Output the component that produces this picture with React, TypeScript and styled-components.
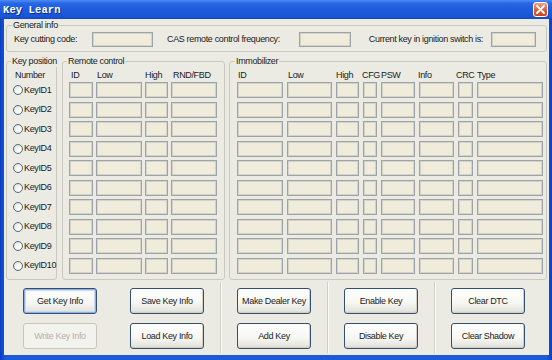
import React from 'react';
import styled, { createGlobalStyle } from 'styled-components';

type Col = { title: string; w: number; indent: number };

const remoteCols: Col[] = [
  { title: 'ID', w: 24, indent: 2 },
  { title: 'Low', w: 46, indent: 1 },
  { title: 'High', w: 23, indent: 0 },
  { title: 'RND/FBD', w: 46, indent: 2 },
];

const immoCols: Col[] = [
  { title: 'ID', w: 46, indent: 1 },
  { title: 'Low', w: 45, indent: 1 },
  { title: 'High', w: 23, indent: 0 },
  { title: 'CFG', w: 14, indent: -1 },
  { title: 'PSW', w: 34, indent: 0 },
  { title: 'Info', w: 35, indent: -1 },
  { title: 'CRC', w: 15, indent: -2 },
  { title: 'Type', w: 66, indent: 0 },
];

const keyIds = Array.from({ length: 10 }, (_, i) => `KeyID${i + 1}`);

type Btn = { label: string; kind?: 'default' | 'disabled' };

const buttonCols: Btn[][] = [
  [{ label: 'Get Key Info', kind: 'default' }, { label: 'Write Key Info', kind: 'disabled' }],
  [{ label: 'Save Key Info' }, { label: 'Load Key Info' }],
  [{ label: 'Make Dealer Key' }, { label: 'Add Key' }],
  [{ label: 'Enable Key' }, { label: 'Disable Key' }],
  [{ label: 'Clear DTC' }, { label: 'Clear Shadow' }],
];

const colTemplate = (cols: Col[]) => cols.map((c) => `${c.w}px`).join(' ');

const App: React.FC = () => {
  return (
    <>
      <GlobalStyle />
      <Window>
        <TitleBar>
          <Title>Key Learn</Title>
          <CloseButton aria-label="Close">
            <svg width="9" height="9" viewBox="0 0 9 9">
              <path d="M1 1 L8 8 M8 1 L1 8" stroke="#fff" strokeWidth="1.8" strokeLinecap="round" />
            </svg>
          </CloseButton>
        </TitleBar>

        <Body>
          <GeneralGroup>
            <Legend>General info</Legend>
            <InfoRow>
              <InfoField>
                <InfoLabel $w={78}>Key cutting code:</InfoLabel>
                <TextBox $w={61} $h={15} />
              </InfoField>
              <InfoField>
                <InfoLabel $w={132}>CAS remote control frequency:</InfoLabel>
                <TextBox $w={52} $h={15} />
              </InfoField>
              <InfoField>
                <InfoLabel $w={126} $right>Current key in ignition switch is:</InfoLabel>
                <TextBox $w={45} $h={15} />
              </InfoField>
            </InfoRow>
          </GeneralGroup>

          <MainRow>
            <Group $w={51} $pl={6}>
              <Legend>Key position</Legend>
              <HeaderRow $cols="1fr" $gap={0}>
                <Header $indent={2}>Number</Header>
              </HeaderRow>
              <RadioList>
                {keyIds.map((k) => (
                  <RadioRow key={k}>
                    <RadioDot />
                    <RadioText>{k}</RadioText>
                  </RadioRow>
                ))}
              </RadioList>
            </Group>

            <Group $w={163} $pl={6}>
              <Legend>Remote control</Legend>
              <HeaderRow $cols={colTemplate(remoteCols)} $gap={3}>
                {remoteCols.map((c) => (
                  <Header key={c.title} $indent={c.indent}>{c.title}</Header>
                ))}
              </HeaderRow>
              <FieldGrid $cols={colTemplate(remoteCols)} $gap={3}>
                {keyIds.map((k) =>
                  remoteCols.map((c) => <TextBox key={k + c.title} $h={16} />)
                )}
              </FieldGrid>
            </Group>

            <Group $w={318} $pl={7}>
              <Legend>Immobilizer</Legend>
              <HeaderRow $cols={colTemplate(immoCols)} $gap={4}>
                {immoCols.map((c) => (
                  <Header key={c.title} $indent={c.indent}>{c.title}</Header>
                ))}
              </HeaderRow>
              <FieldGrid $cols={colTemplate(immoCols)} $gap={4}>
                {keyIds.map((k) =>
                  immoCols.map((c) => <TextBox key={k + c.title} $h={16} />)
                )}
              </FieldGrid>
            </Group>
          </MainRow>

          <ButtonBar>
            {buttonCols.map((col, i) => (
              <ButtonCol key={i} $divider={i >= 2}>
                {col.map((b) => (
                  <XpButton
                    key={b.label}
                    $default={b.kind === 'default'}
                    disabled={b.kind === 'disabled'}
                  >
                    {b.label}
                  </XpButton>
                ))}
              </ButtonCol>
            ))}
          </ButtonBar>
        </Body>
      </Window>
    </>
  );
};

export default App;

const GlobalStyle = createGlobalStyle`
  html, body {
    margin: 0;
    padding: 0;
    background: #ffffff;
  }
  body {
    font-family: 'Liberation Sans', Arial, sans-serif;
  }
`;

const Window = styled.div`
  width: 552px;
  height: 360px;
  display: flex;
  flex-direction: column;
  background: linear-gradient(90deg, #0b3fc4 0%, #1b5ad9 1%, #1b5ad9 99%, #0b3fc4 100%);
  box-sizing: border-box;
  overflow: hidden;
`;

const TitleBar = styled.div`
  height: 19px;
  flex: 0 0 19px;
  display: flex;
  align-items: center;
  justify-content: space-between;
  padding: 0 4px 0 3px;
  background: linear-gradient(180deg, #4a8cf5 0%, #2866e3 18%, #1d5cdc 50%, #1a56d6 85%, #1448c0 100%);
`;

const Title = styled.span`
  color: #ffffff;
  font-family: 'Liberation Mono', 'Courier New', monospace;
  font-weight: bold;
  font-size: 10.5px;
  letter-spacing: 0.1px;
  text-shadow: 1px 1px 0 #0c2f8a;
`;

const CloseButton = styled.div`
  width: 15px;
  height: 15px;
  border: 1px solid #ffffff;
  border-radius: 3px;
  box-sizing: border-box;
  display: flex;
  align-items: center;
  justify-content: center;
  background: linear-gradient(180deg, #f0a58a 0%, #e0683e 45%, #c9441c 100%);
`;

const Body = styled.div`
  flex: 1;
  margin: 0 3px 5px 4px;
  background: #ebebe4;
  display: flex;
  flex-direction: column;
  color: #1a1a1a;
  font-size: 9px;
  letter-spacing: -0.35px;
`;

const Fieldset = styled.fieldset`
  margin: 0;
  min-width: 0;
  border: 1px solid #c9c9bf;
  border-radius: 3px;
  box-sizing: border-box;
`;

const GeneralGroup = styled(Fieldset)`
  margin: 1px 2px 0 2px;
  padding: 1px 10px 4px 7px;
`;

const Group = styled(Fieldset)<{ $w: number; $pl: number }>`
  width: ${(p) => p.$w}px;
  flex: 0 0 ${(p) => p.$w}px;
  padding: 3px 2px 5px ${(p) => p.$pl}px;
`;

const Legend = styled.legend`
  padding: 0 1px;
  margin-left: -2px;
  line-height: 11px;
  font-size: 9px;
  color: #222222;
  white-space: nowrap;
`;

const InfoRow = styled.div`
  display: flex;
  align-items: center;
  gap: 14px;
`;

const InfoField = styled.div`
  display: flex;
  align-items: center;
`;

const InfoLabel = styled.span<{ $w: number; $right?: boolean }>`
  width: ${(p) => p.$w}px;
  padding-right: ${(p) => (p.$right ? 8 : 0)}px;
  box-sizing: border-box;
  text-align: ${(p) => (p.$right ? 'right' : 'left')};
  white-space: nowrap;
  line-height: 11px;
`;

const TextBox = styled.div<{ $w?: number; $h: number }>`
  width: ${(p) => (p.$w ? `${p.$w}px` : 'auto')};
  height: ${(p) => p.$h}px;
  box-sizing: border-box;
  background: #efecdb;
  border: 1px solid #9ea3a8;
  box-shadow: inset 0 0 0 1px #d3d3c9;
`;

const MainRow = styled.div`
  display: flex;
  margin: 4px 2px 0 2px;
  gap: 5px;

  & > fieldset:last-child {
    margin-left: -1px;
  }
`;

const HeaderRow = styled.div<{ $cols: string; $gap: number }>`
  display: grid;
  grid-template-columns: ${(p) => p.$cols};
  column-gap: ${(p) => p.$gap}px;
  height: 11px;
  margin-bottom: 1px;
`;

const Header = styled.span<{ $indent: number }>`
  line-height: 11px;
  padding-left: ${(p) => Math.max(p.$indent, 0)}px;
  margin-left: ${(p) => Math.min(p.$indent, 0)}px;
  white-space: nowrap;
`;

const FieldGrid = styled.div<{ $cols: string; $gap: number }>`
  display: grid;
  grid-template-columns: ${(p) => p.$cols};
  grid-auto-rows: 16px;
  column-gap: ${(p) => p.$gap}px;
  row-gap: 3.5px;
`;

const RadioList = styled.div`
  display: flex;
  flex-direction: column;
  gap: 3.5px;
`;

const RadioRow = styled.div`
  height: 16px;
  display: flex;
  align-items: center;
  gap: 1px;
  white-space: nowrap;
`;

const RadioDot = styled.span`
  width: 10px;
  height: 10px;
  flex: 0 0 10px;
  border-radius: 50%;
  box-sizing: border-box;
  border: 1px solid #4d6a86;
  background: radial-gradient(circle at 65% 65%, #ffffff 0%, #f4f4f0 40%, #d8d8cf 100%);
`;

const RadioText = styled.span`
  line-height: 11px;
`;

const ButtonBar = styled.div`
  display: grid;
  grid-template-columns: repeat(5, 107px);
  padding: 2.5px 0 2px 2.5px;
  flex: 1;
`;

const ButtonCol = styled.div<{ $divider: boolean }>`
  display: flex;
  flex-direction: column;
  align-items: center;
  gap: 9px;
  padding-top: 6px;
  margin-left: ${(p) => (p.$divider ? -1 : 0)}px;
  border-left: ${(p) => (p.$divider ? '1px solid #cfcfc6' : 'none')};
  box-shadow: ${(p) => (p.$divider ? 'inset 1px 0 0 #fafaf6' : 'none')};
`;

const XpButton = styled.button<{ $default?: boolean }>`
  width: 74px;
  height: 26px;
  padding: 0;
  box-sizing: border-box;
  font-family: 'Liberation Sans', Arial, sans-serif;
  font-size: 9px;
  letter-spacing: -0.35px;
  color: #1a1a1a;
  white-space: nowrap;
  border: 1px solid #34506e;
  border-radius: 3px;
  background: linear-gradient(180deg, #ffffff 0%, #f6f6f2 60%, #e6e5de 90%, #d6d4cb 100%);
  box-shadow: ${(p) =>
    p.$default
      ? 'inset 0 0 0 1px #8fb0e4, inset 0 0 0 2px #c8d8f4'
      : 'inset -1px -1px 0 #d2d0c6'};

  &:disabled {
    color: #b3b1a6;
    border-color: #c9c7bc;
    background: #f3f3ee;
    box-shadow: none;
  }
`;
